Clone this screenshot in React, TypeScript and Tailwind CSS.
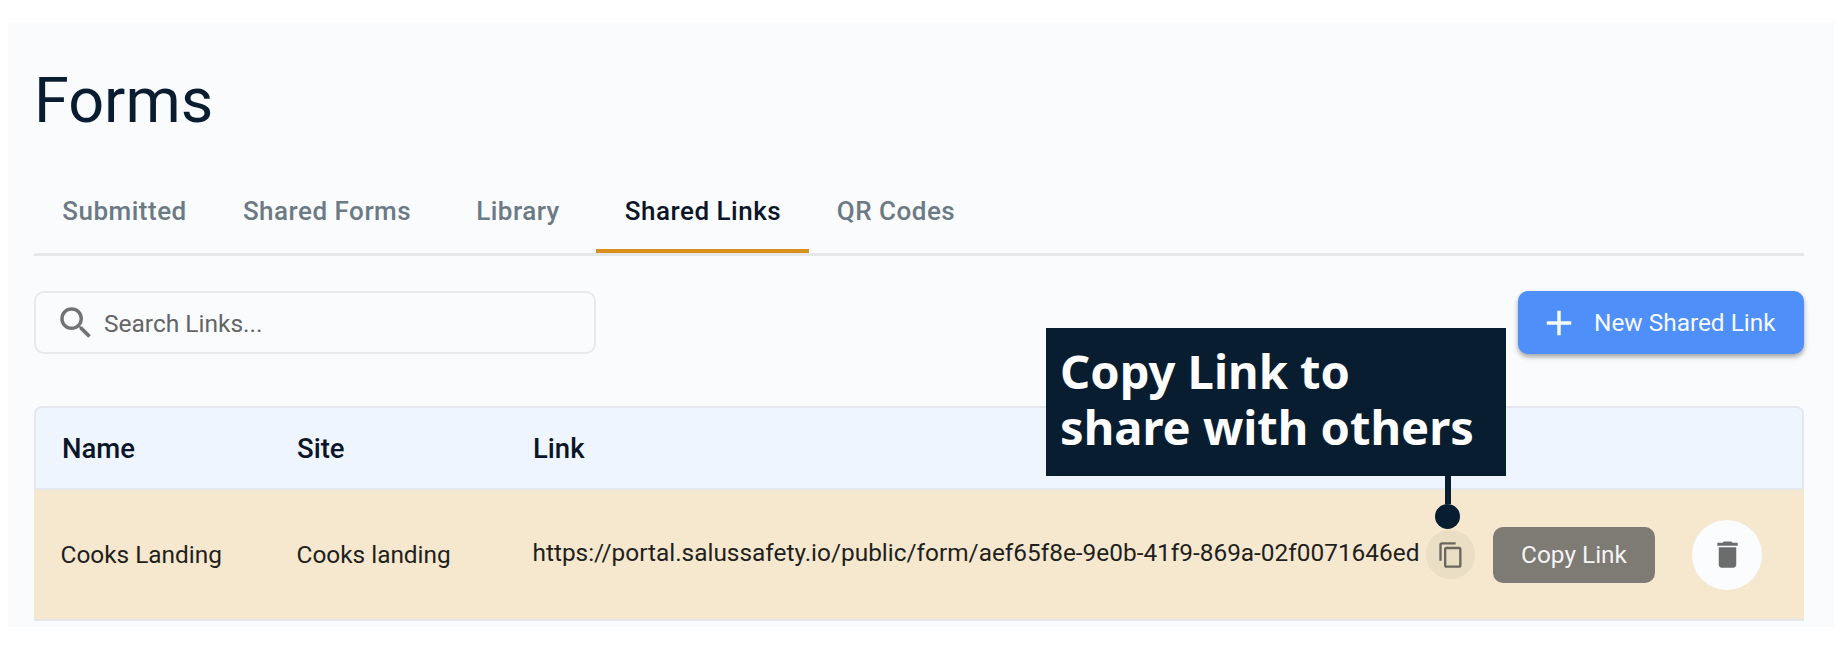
import React, { useState } from "react";
import { MdAdd, MdContentCopy, MdDelete, MdSearch } from "react-icons/md";

const tabs = [
  { name: "Submitted", width: "w-[180px]" },
  { name: "Shared Forms", width: "w-[225px]" },
  { name: "Library", width: "w-[157px]" },
  { name: "Shared Links", width: "w-[213px]" },
  { name: "QR Codes", width: "w-[173px]" },
];

const links = [
  {
    name: "Cooks Landing",
    site: "Cooks landing",
    url: "https://portal.salussafety.io/public/form/aef65f8e-9e0b-41f9-869a-02f0071646ed",
  },
];

function Tabs() {
  const [active, setActive] = useState("Shared Links");

  return (
    <div className="flex h-[74px] border-b-3 border-[#e6e7e9]">
      {tabs.map((tab) => (
        <button
          key={tab.name}
          onClick={() => setActive(tab.name)}
          className={`${tab.width} border-b-4 pb-[8px] pl-[1px] text-center text-[26px] leading-[59px] font-medium tracking-[0.5px] whitespace-nowrap ${
            active === tab.name
              ? "border-[#d98f1c] text-[#0a1628]"
              : "border-transparent text-[#6b7a84]"
          }`}
        >
          {tab.name}
        </button>
      ))}
    </div>
  );
}

function Toolbar() {
  return (
    <div className="mt-[35px] flex justify-between">
      <div className="flex h-[63px] w-[562px] items-center rounded-[10px] border-2 border-[#e8e9eb] pl-[19px]">
        <MdSearch className="size-[42px] text-[#727374]" />
        <input
          placeholder="Search Links..."
          className="ml-[7px] w-[400px] bg-transparent pt-[3px] text-[24.5px] outline-none placeholder:text-[#636465]"
        />
      </div>
      <button className="flex h-[63px] w-[286px] items-center rounded-[10px] bg-[#4f8ff9] pl-[20px] text-[24.4px] text-[#f6faff] shadow-[0_3px_5px_rgba(0,0,0,0.35)]">
        <MdAdd className="size-[42px]" />
        <span className="ml-[14px] pt-[2px] whitespace-nowrap">New Shared Link</span>
      </button>
    </div>
  );
}

function LinksTable() {
  return (
    <div className="mt-[52px]">
      <div className="flex h-[84px] items-center rounded-t-[8px] border-2 border-[#e4e8ee] bg-[#eff5fe] pt-[1px] pl-[26px] text-[27.5px] font-medium text-[#0a1628]">
        <div className="w-[235px]">Name</div>
        <div className="w-[236px]">Site</div>
        <div>Link</div>
      </div>
      {links.map((link) => (
        <div
          key={link.url}
          className="flex h-[131px] items-center border-b-2 border-[#e4e6e9] bg-[#f6e8cf] pl-[26.5px] text-[24.4px] whitespace-nowrap text-[#1f1f1d]"
        >
          <div className="w-[236px] pt-[1px]">{link.name}</div>
          <div className="w-[236px] pt-[1px]">{link.site}</div>
          <div className="w-[893.5px] pb-[2px]">{link.url}</div>
          <button className="flex size-[49px] items-center justify-center rounded-full bg-[#eadec5]">
            <MdContentCopy className="size-[28px] text-[#6b675e]" />
          </button>
          <div className="ml-[18px] flex h-[56px] w-[162px] items-center justify-center rounded-[10px] bg-[#7e7a74] pt-[1px] text-[#f4f4f3]">
            Copy Link
          </div>
          <button className="ml-[37px] flex size-[70px] items-center justify-center rounded-full bg-[#fafcfe]">
            <MdDelete className="size-[35px] text-[#6c6c6c]" />
          </button>
        </div>
      ))}
    </div>
  );
}

function Callout() {
  return (
    <div className="absolute top-[328px] left-[1046px] w-[460px]">
      <div className="h-[148px] bg-[#081d30] pt-[15px] pl-[14px] font-['Noto_Sans'] text-[47.1px] leading-[56px] font-bold whitespace-nowrap text-white">
        Copy Link to
        <br />
        share with others
      </div>
      <div className="ml-[389px] flex w-[25px] flex-col items-center">
        <div className="h-[28px] w-[6px] bg-[#081d30]" />
        <div className="size-[25px] rounded-full bg-[#081d30]" />
      </div>
    </div>
  );
}

function App() {
  return (
    <div className="relative h-[646px] w-[1846px] overflow-hidden bg-white pt-[22px] pl-[8px] font-['Roboto',sans-serif]">
      <div className="h-[605px] w-[1826px] bg-[#fafbfd] pr-[30px] pl-[26px]">
        <h1 className="h-[160px] pt-[41px] text-[63px] leading-[75px] text-[#0a1c2f]">
          Forms
        </h1>
        <Tabs />
        <Toolbar />
        <LinksTable />
      </div>
      <Callout />
    </div>
  );
}

export default App;
